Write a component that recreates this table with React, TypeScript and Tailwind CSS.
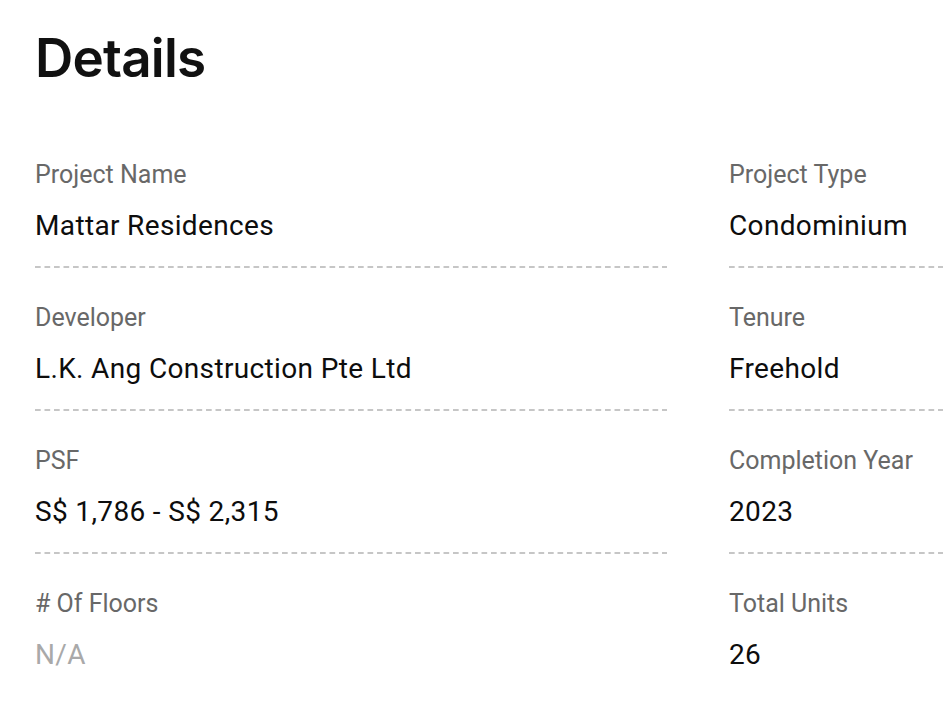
import React from "react";

type Item = { label: string; value: string; muted?: boolean; last?: boolean };

const left: Item[] = [
  { label: "Project Name", value: "Mattar Residences" },
  { label: "Developer", value: "L.K. Ang Construction Pte Ltd" },
  { label: "PSF", value: "S$ 1,786 - S$ 2,315" },
  { label: "# Of Floors", value: "N/A", muted: true, last: true },
];

const right: Item[] = [
  { label: "Project Type", value: "Condominium" },
  { label: "Tenure", value: "Freehold" },
  { label: "Completion Year", value: "2023" },
  { label: "Total Units", value: "26", last: true },
];

function DetailRow({ label, value, muted, last }: Item) {
  return (
    <div className="flex flex-col">
      <span className="text-[25px] leading-[34px] text-[#686868]">{label}</span>
      <span
        className={
          "mt-[15px] text-[28px] leading-[38px] tracking-[0.35px] " +
          (muted ? "text-[#a9a9a9]" : "text-[#0d0d0d]")
        }
      >
        {value}
      </span>
      {!last && (
        <div className="mt-[21px] mb-[33px] h-[2px] w-full bg-[linear-gradient(to_right,#c6c6c6_6px,transparent_6px)] bg-[length:9.5px_2px] bg-repeat-x" />
      )}
    </div>
  );
}

export default function App() {
  return (
    <div className="h-[717px] w-[943px] overflow-hidden bg-white" style={{ fontFamily: "Roboto, 'Liberation Sans', sans-serif" }}>
      <div className="w-[1400px] px-[35px] pt-[22px]">
        <h1 className="text-[53px] leading-[72px] font-semibold tracking-[-0.8px] text-[#111111]" style={{ fontFamily: "Inter, 'Noto Sans', sans-serif" }}>
          Details
        </h1>
        <div className="mt-[64px] grid grid-cols-[632px_632px] gap-x-[62px]">
          <div className="flex flex-col">
            {left.map((it) => (
              <DetailRow key={it.label} {...it} />
            ))}
          </div>
          <div className="flex flex-col">
            {right.map((it) => (
              <DetailRow key={it.label} {...it} />
            ))}
          </div>
        </div>
      </div>
    </div>
  );
}
